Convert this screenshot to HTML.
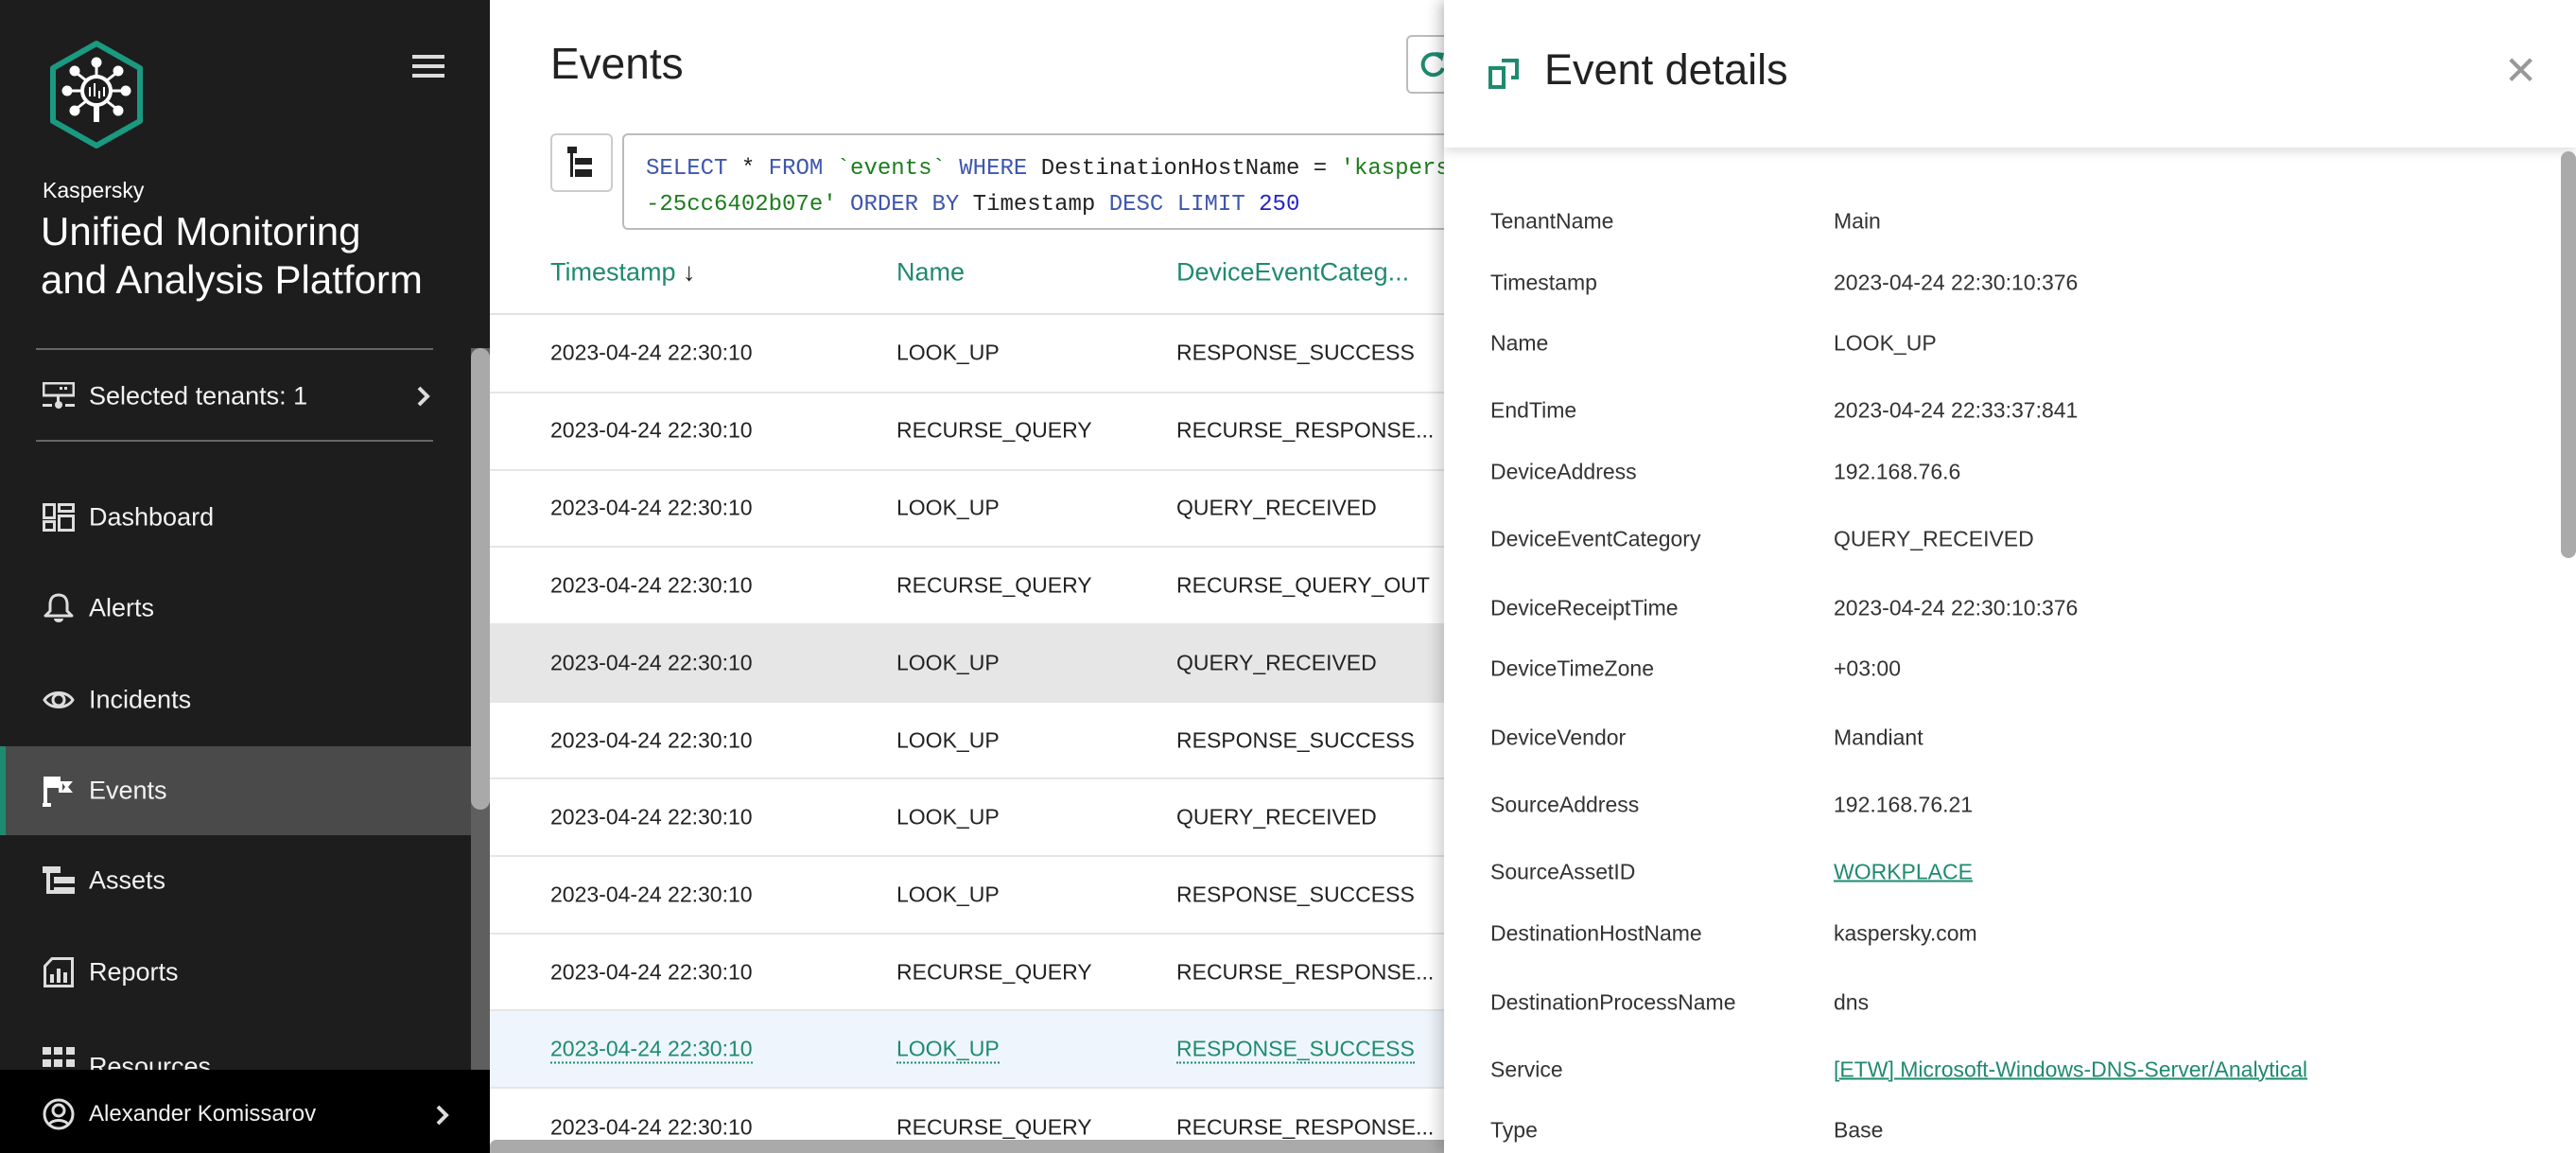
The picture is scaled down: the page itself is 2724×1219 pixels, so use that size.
<!DOCTYPE html>
<html><head><meta charset="utf-8"><style>
*{margin:0;padding:0;box-sizing:border-box}
body{width:2724px;height:1219px;overflow:hidden;background:#fff;font-family:"Liberation Sans",sans-serif;position:relative}
.a{position:absolute;white-space:nowrap}
#side{position:absolute;left:0;top:0;width:518px;height:1219px;background:#1d1d1d;color:#fff}
.nav{position:absolute;left:94px;font-size:27px;color:#f2f2f2;transform:translateY(-50%)}
.ic{position:absolute;left:45px;transform:translateY(-50%)}
.cell{position:absolute;font-size:23px;color:#222;transform:translateY(-50%)}
.hd{position:absolute;font-size:27px;color:#1f8a70;transform:translateY(-50%)}
.lab{position:absolute;left:1576px;font-size:23px;color:#333;transform:translateY(-50%)}
.val{position:absolute;left:1939px;font-size:23px;color:#333;transform:translateY(-50%)}
.lnk{color:#1f8a70;text-decoration:underline;text-decoration-thickness:2px}
.mono{font-family:"Liberation Mono",monospace;font-size:24px}
.kw{color:#3e56ae}.st{color:#1b7d1b}.nm{color:#2323c8}
</style></head><body>

<div id="side">
<svg class="a" style="left:44px;top:42px" width="116" height="116" viewBox="0 0 116 116">
<polygon points="58,4 104,30 104,86 58,112 12,86 12,30" fill="none" stroke="#1a9a80" stroke-width="6" stroke-linejoin="round"/>
<g stroke="#fff" stroke-width="3" fill="#fff">
<circle cx="58" cy="54" r="15" fill="none" stroke-width="4"/>
<rect x="55" y="69" width="6" height="18" stroke="none"/>
<line x1="58" y1="39" x2="58" y2="26"/><circle cx="58" cy="24" r="4"/>
<line x1="43" y1="54" x2="30" y2="54"/><circle cx="27" cy="54" r="4"/>
<line x1="73" y1="54" x2="86" y2="54"/><circle cx="89" cy="54" r="4"/>
<line x1="47" y1="43" x2="38" y2="36"/><circle cx="35" cy="33" r="4"/>
<line x1="69" y1="43" x2="78" y2="36"/><circle cx="81" cy="33" r="4"/>
<line x1="47" y1="65" x2="38" y2="72"/><circle cx="35" cy="75" r="4"/>
<line x1="69" y1="65" x2="78" y2="72"/><circle cx="81" cy="75" r="4"/>
<line x1="51" y1="50" x2="51" y2="60" stroke-width="2"/><line x1="56" y1="46" x2="56" y2="60" stroke-width="2"/><line x1="61" y1="54" x2="61" y2="62" stroke-width="2"/><line x1="66" y1="50" x2="66" y2="60" stroke-width="2"/>
</g></svg>
<div class="a" style="left:436px;top:58px;width:34px;height:4px;background:#ddd"></div>
<div class="a" style="left:436px;top:68px;width:34px;height:4px;background:#ddd"></div>
<div class="a" style="left:436px;top:78px;width:34px;height:4px;background:#ddd"></div>
<div class="a" style="left:45px;top:188px;font-size:23px">Kaspersky</div>
<div class="a" style="left:43px;top:219px;font-size:42px;line-height:51px">Unified Monitoring<br>and Analysis Platform</div>
<div class="a" style="left:38px;top:368px;width:420px;height:2px;background:#666"></div>
<div class="a" style="left:38px;top:465px;width:420px;height:2px;background:#666"></div>
<svg class="ic" style="top:419px" width="34" height="30" viewBox="0 0 34 30"><rect x="1" y="1" width="32" height="13" fill="none" stroke="#ddd" stroke-width="3"/><rect x="18" y="5" width="3" height="3" fill="#ddd"/><rect x="23" y="5" width="3" height="3" fill="#ddd"/><rect x="15" y="14" width="3" height="8" fill="#ddd"/><circle cx="17" cy="24" r="4" fill="#ddd"/><rect x="0" y="23" width="10" height="3" fill="#ddd"/><rect x="24" y="23" width="10" height="3" fill="#ddd"/></svg>
<div class="nav" style="top:419px;font-size:27px">Selected tenants: 1</div>
<svg class="a" style="left:440px;top:407px" width="16" height="24" viewBox="0 0 16 24"><path d="M3 3l9 9-9 9" fill="none" stroke="#ddd" stroke-width="4"/></svg>
<svg class="ic" style="top:547px" width="34" height="30" viewBox="0 0 34 30"><g fill="none" stroke="#ddd" stroke-width="3"><rect x="1.5" y="1.5" width="11" height="14"/><rect x="17.5" y="1.5" width="15" height="7"/><rect x="1.5" y="19.5" width="11" height="9"/><rect x="17.5" y="13.5" width="15" height="15"/></g></svg>
<div class="nav" style="top:547px">Dashboard</div>
<svg class="ic" style="top:643px" width="34" height="34" viewBox="0 0 34 34"><path d="M17 3c-6 0-9 4-9 10v7l-5 5h28l-5-5v-7c0-6-3-10-9-10z" fill="none" stroke="#ddd" stroke-width="3" stroke-linejoin="round"/><path d="M12 28a5 4 0 0 0 10 0z" fill="#ddd"/></svg>
<div class="nav" style="top:643px">Alerts</div>
<svg class="ic" style="top:740px" width="34" height="26" viewBox="0 0 34 26"><path d="M2 13C8 3 26 3 32 13C26 23 8 23 2 13z" fill="none" stroke="#ddd" stroke-width="3"/><circle cx="17" cy="13" r="6" fill="none" stroke="#ddd" stroke-width="3"/></svg>
<div class="nav" style="top:740px">Incidents</div>
<div class="a" style="left:0;top:789px;width:498px;height:94px;background:#4a4a4a"></div>
<div class="a" style="left:0;top:789px;width:6px;height:94px;background:#1f8a70"></div>
<svg class="ic" style="top:836px" width="34" height="34" viewBox="0 0 34 34"><rect x="1" y="2" width="4" height="32" fill="#fff"/><rect x="0" y="30" width="9" height="4" fill="#fff"/><path d="M5 2h14v5h13l-5 6 5 6H17v-5H5z" fill="#fff"/><path d="M21 9l3 4-3 4" fill="#4a4a4a"/></svg>
<div class="nav" style="top:836px">Events</div>
<svg class="ic" style="top:931px" width="34" height="30" viewBox="0 0 34 30"><rect x="0" y="0" width="19" height="7" fill="#ddd"/><rect x="4" y="7" width="4" height="22" fill="#ddd"/><rect x="4" y="25" width="8" height="4" fill="#ddd"/><rect x="12" y="11" width="22" height="7" fill="#ddd"/><rect x="12" y="22" width="22" height="7" fill="#ddd"/></svg>
<div class="nav" style="top:931px">Assets</div>
<svg class="ic" style="top:1028px" width="34" height="32" viewBox="0 0 34 32"><path d="M10 1.5h21.5v29h-29v-21z" fill="none" stroke="#ddd" stroke-width="3"/><rect x="8" y="18" width="4" height="9" fill="#ddd"/><rect x="15" y="12" width="4" height="15" fill="#ddd"/><rect x="22" y="16" width="4" height="11" fill="#ddd"/></svg>
<div class="nav" style="top:1028px">Reports</div>
<svg class="ic" style="top:1118px" width="34" height="22" viewBox="0 0 34 22"><g fill="#ddd"><rect x="0" y="0" width="9" height="8"/><rect x="12" y="0" width="9" height="8"/><rect x="25" y="0" width="9" height="8"/><rect x="0" y="13" width="9" height="8"/><rect x="12" y="13" width="9" height="8"/><rect x="25" y="13" width="9" height="8"/></g></svg>
<div class="nav" style="top:1128px">Resources</div>
<div class="a" style="left:498px;top:368px;width:20px;height:763px;background:#5f5f5f"></div>
<div class="a" style="left:498px;top:368px;width:20px;height:488px;background:#a9a9a9;border-radius:10px"></div>
<div class="a" style="left:0;top:1131px;width:518px;height:88px;background:#000"></div>
<svg class="ic" style="top:1178px" width="34" height="34" viewBox="0 0 34 34"><circle cx="17" cy="17" r="15" fill="none" stroke="#ddd" stroke-width="3"/><circle cx="17" cy="13" r="6" fill="none" stroke="#ddd" stroke-width="3"/><path d="M7 28c3-6 17-6 20 0" fill="none" stroke="#ddd" stroke-width="3"/></svg>
<div class="nav" style="top:1178px;font-size:24px">Alexander Komissarov</div>
<svg class="a" style="left:460px;top:1167px" width="16" height="24" viewBox="0 0 16 24"><path d="M3 3l9 9-9 9" fill="none" stroke="#ddd" stroke-width="4"/></svg>
</div>

<div class="a" style="left:582px;top:40px;font-size:46px;color:#222">Events</div>
<div class="a" style="left:1487px;top:37px;width:60px;height:62px;border:2px solid #bbb;border-radius:6px"></div>
<svg class="a" style="left:1500px;top:52px" width="30" height="32" viewBox="0 0 30 32"><path d="M24 9A11 11 0 1 0 26 20" fill="none" stroke="#1f8a70" stroke-width="4"/><path d="M18 3l9 1-2 9z" fill="#1f8a70"/></svg>
<div class="a" style="left:582px;top:141px;width:66px;height:62px;border:2px solid #ccc;border-radius:6px"></div>
<svg class="a" style="left:600px;top:155px" width="28" height="34" viewBox="0 0 28 34"><rect x="0" y="0" width="10" height="7" fill="#222"/><rect x="3" y="7" width="3" height="25" fill="#222"/><rect x="8" y="12" width="18" height="7" fill="#222"/><rect x="8" y="24" width="18" height="8" fill="#222"/></svg>
<div class="a" style="left:658px;top:141px;width:900px;height:102px;border:2px solid #bbb;border-radius:6px"></div>
<div class="a mono" style="left:683px;top:160px;line-height:38px;color:#222"><span class="kw">SELECT</span> * <span class="kw">FROM</span> <span class="st">`events`</span> <span class="kw">WHERE</span> DestinationHostName = <span class="st">'kaspersky.com'</span><br><span class="st">-25cc6402b07e'</span> <span class="kw">ORDER BY</span> Timestamp <span class="kw">DESC LIMIT</span> <span class="nm">250</span></div>

<div class="hd" style="left:582px;top:288px">Timestamp <b style="color:#222">↓</b></div>
<div class="hd" style="left:948px;top:288px">Name</div>
<div class="hd" style="left:1244px;top:288px">DeviceEventCateg...</div>
<div class="a" style="left:518px;top:331px;width:1010px;height:2px;background:#e2e2e2"></div>

<div class="a" style="left:518px;top:660px;width:1010px;height:82px;background:#e6e6e6"></div>
<div class="a" style="left:518px;top:1068px;width:1010px;height:82px;background:#eef5fc"></div>
<div class="a" style="left:518px;top:414px;width:1010px;height:2px;background:#e6e6e6"></div>
<div class="a" style="left:518px;top:496px;width:1010px;height:2px;background:#e6e6e6"></div>
<div class="a" style="left:518px;top:577px;width:1010px;height:2px;background:#e6e6e6"></div>
<div class="a" style="left:518px;top:659px;width:1010px;height:2px;background:#e6e6e6"></div>
<div class="a" style="left:518px;top:741px;width:1010px;height:2px;background:#e6e6e6"></div>
<div class="a" style="left:518px;top:822px;width:1010px;height:2px;background:#e6e6e6"></div>
<div class="a" style="left:518px;top:904px;width:1010px;height:2px;background:#e6e6e6"></div>
<div class="a" style="left:518px;top:986px;width:1010px;height:2px;background:#e6e6e6"></div>
<div class="a" style="left:518px;top:1067px;width:1010px;height:2px;background:#e6e6e6"></div>
<div class="a" style="left:518px;top:1149px;width:1010px;height:2px;background:#e6e6e6"></div>

<div class="cell" style="left:582px;top:373px">2023-04-24 22:30:10</div><div class="cell" style="left:948px;top:373px">LOOK_UP</div><div class="cell" style="left:1244px;top:373px">RESPONSE_SUCCESS</div>
<div class="cell" style="left:582px;top:455px">2023-04-24 22:30:10</div><div class="cell" style="left:948px;top:455px">RECURSE_QUERY</div><div class="cell" style="left:1244px;top:455px">RECURSE_RESPONSE...</div>
<div class="cell" style="left:582px;top:537px">2023-04-24 22:30:10</div><div class="cell" style="left:948px;top:537px">LOOK_UP</div><div class="cell" style="left:1244px;top:537px">QUERY_RECEIVED</div>
<div class="cell" style="left:582px;top:619px">2023-04-24 22:30:10</div><div class="cell" style="left:948px;top:619px">RECURSE_QUERY</div><div class="cell" style="left:1244px;top:619px">RECURSE_QUERY_OUT</div>
<div class="cell" style="left:582px;top:701px">2023-04-24 22:30:10</div><div class="cell" style="left:948px;top:701px">LOOK_UP</div><div class="cell" style="left:1244px;top:701px">QUERY_RECEIVED</div>
<div class="cell" style="left:582px;top:783px">2023-04-24 22:30:10</div><div class="cell" style="left:948px;top:783px">LOOK_UP</div><div class="cell" style="left:1244px;top:783px">RESPONSE_SUCCESS</div>
<div class="cell" style="left:582px;top:864px">2023-04-24 22:30:10</div><div class="cell" style="left:948px;top:864px">LOOK_UP</div><div class="cell" style="left:1244px;top:864px">QUERY_RECEIVED</div>
<div class="cell" style="left:582px;top:946px">2023-04-24 22:30:10</div><div class="cell" style="left:948px;top:946px">LOOK_UP</div><div class="cell" style="left:1244px;top:946px">RESPONSE_SUCCESS</div>
<div class="cell" style="left:582px;top:1028px">2023-04-24 22:30:10</div><div class="cell" style="left:948px;top:1028px">RECURSE_QUERY</div><div class="cell" style="left:1244px;top:1028px">RECURSE_RESPONSE...</div>
<div class="cell" style="left:582px;top:1110px;color:#1f8a70;border-bottom:2px dotted #1f8a70">2023-04-24 22:30:10</div><div class="cell" style="left:948px;top:1110px;color:#1f8a70;border-bottom:2px dotted #1f8a70">LOOK_UP</div><div class="cell" style="left:1244px;top:1110px;color:#1f8a70;border-bottom:2px dotted #1f8a70">RESPONSE_SUCCESS</div>
<div class="cell" style="left:582px;top:1192px">2023-04-24 22:30:10</div><div class="cell" style="left:948px;top:1192px">RECURSE_QUERY</div><div class="cell" style="left:1244px;top:1192px">RECURSE_RESPONSE...</div>
<div class="a" style="left:518px;top:1205px;width:1010px;height:14px;background:#aaa;border-radius:7px 0 0 0"></div>

<div class="a" style="left:1527px;top:0;width:1197px;height:1219px;background:#fff;box-shadow:-6px 0 14px rgba(0,0,0,.18)"></div>
<div class="a" style="left:1527px;top:0;width:1197px;height:156px;background:#fff;box-shadow:0 5px 10px rgba(0,0,0,.12)"></div>
<svg class="a" style="left:1574px;top:60px" width="34" height="34" viewBox="0 0 34 34"><rect x="2" y="12" width="14" height="20" fill="none" stroke="#1f8a70" stroke-width="4"/><path d="M14 4h16v18h-6" fill="none" stroke="#1f8a70" stroke-width="4"/></svg>
<div class="a" style="left:1633px;top:48px;font-size:45px;color:#222">Event details</div>
<div class="a" style="left:2648px;top:50px;font-size:42px;color:#999">✕</div>
<div class="a" style="left:2708px;top:160px;width:16px;height:430px;background:#aaa;border-radius:8px"></div>

<div class="lab" style="top:234px">TenantName</div><div class="val" style="top:234px">Main</div>
<div class="lab" style="top:299px">Timestamp</div><div class="val" style="top:299px">2023-04-24 22:30:10:376</div>
<div class="lab" style="top:363px">Name</div><div class="val" style="top:363px">LOOK_UP</div>
<div class="lab" style="top:434px">EndTime</div><div class="val" style="top:434px">2023-04-24 22:33:37:841</div>
<div class="lab" style="top:499px">DeviceAddress</div><div class="val" style="top:499px">192.168.76.6</div>
<div class="lab" style="top:570px">DeviceEventCategory</div><div class="val" style="top:570px">QUERY_RECEIVED</div>
<div class="lab" style="top:643px">DeviceReceiptTime</div><div class="val" style="top:643px">2023-04-24 22:30:10:376</div>
<div class="lab" style="top:707px">DeviceTimeZone</div><div class="val" style="top:707px">+03:00</div>
<div class="lab" style="top:780px">DeviceVendor</div><div class="val" style="top:780px">Mandiant</div>
<div class="lab" style="top:851px">SourceAddress</div><div class="val" style="top:851px">192.168.76.21</div>
<div class="lab" style="top:922px">SourceAssetID</div><div class="val lnk" style="top:922px">WORKPLACE</div>
<div class="lab" style="top:987px">DestinationHostName</div><div class="val" style="top:987px">kaspersky.com</div>
<div class="lab" style="top:1060px">DestinationProcessName</div><div class="val" style="top:1060px">dns</div>
<div class="lab" style="top:1131px">Service</div><div class="val lnk" style="top:1131px">[ETW] Microsoft-Windows-DNS-Server/Analytical</div>
<div class="lab" style="top:1195px">Type</div><div class="val" style="top:1195px">Base</div>
</body></html>
